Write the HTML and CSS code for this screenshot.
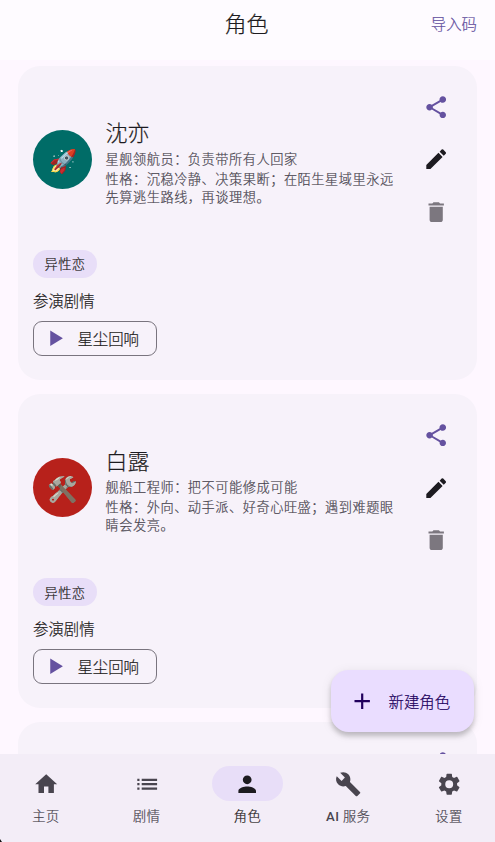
FILE: index.html
```html
<!DOCTYPE html>
<html lang="zh-CN">
<head>
<meta charset="utf-8">
<title>角色</title>
<link rel="stylesheet" href="styles.css">
</head>
<body>
<svg class="defs" aria-hidden="true">
  <symbol id="share" viewBox="0 0 24 24"><path d="M18 16.08c-.76 0-1.44.3-1.96.77L8.91 12.7c.05-.23.09-.46.09-.7s-.04-.47-.09-.7l7.05-4.11c.54.5 1.25.81 2.04.81 1.66 0 3-1.34 3-3s-1.34-3-3-3-3 1.34-3 3c0 .24.04.47.09.7L8.04 9.81C7.5 9.31 6.79 9 6 9c-1.66 0-3 1.34-3 3s1.34 3 3 3c.79 0 1.5-.31 2.04-.81l7.12 4.16c-.05.21-.08.43-.08.65 0 1.61 1.31 2.92 2.92 2.92s2.92-1.31 2.92-2.92-1.31-2.92-2.92-2.92z"/></symbol>
  <symbol id="edit" viewBox="0 0 24 24"><path d="M3 17.25V21h3.75L17.81 9.94l-3.75-3.75L3 17.25zM20.71 7.04c.39-.39.39-1.02 0-1.41l-2.34-2.34a.996.996 0 0 0-1.41 0l-1.83 1.83 3.75 3.75 1.83-1.83z"/></symbol>
  <symbol id="delete" viewBox="0 0 24 24"><path d="M6 19c0 1.1.9 2 2 2h8c1.100 0 2-.9 2-2V7H6v12zM19 4h-3.500l-1-1h-5l-1 1H5v2h14V4z"/></symbol>
  <symbol id="play" viewBox="0 0 24 24"><path d="M7.500 5v14l11.500-7z"/></symbol>
</svg>
<div class="app">
  <header class="topbar">
    <h1>角色</h1>
    <button class="import">导入码</button>
  </header>
  <main class="list">
    <article class="card">
      <div class="profile">
        <div class="avatar teal">🚀</div>
        <div class="info">
          <h2>沈亦</h2>
          <p>星舰领航员：负责带所有人回家</p>
          <p class="trait">性格：沉稳冷静、决策果断；在陌生星域里永远先算逃生路线，再谈理想。</p>
        </div>
        <div class="actions">
          <button><svg class="share"><use href="#share"/></svg></button>
          <button><svg class="edit"><use href="#edit"/></svg></button>
          <button><svg class="delete"><use href="#delete"/></svg></button>
        </div>
      </div>
      <span class="tag">异性恋</span>
      <h3>参演剧情</h3>
      <button class="story"><svg><use href="#play"/></svg>星尘回响</button>
    </article>
    <article class="card">
      <div class="profile">
        <div class="avatar red"><span class="tools">🛠️</span></div>
        <div class="info">
          <h2>白露</h2>
          <p>舰船工程师：把不可能修成可能</p>
          <p class="trait">性格：外向、动手派、好奇心旺盛；遇到难题眼睛会发亮。</p>
        </div>
        <div class="actions">
          <button><svg class="share"><use href="#share"/></svg></button>
          <button><svg class="edit"><use href="#edit"/></svg></button>
          <button><svg class="delete"><use href="#delete"/></svg></button>
        </div>
      </div>
      <span class="tag">异性恋</span>
      <h3>参演剧情</h3>
      <button class="story"><svg><use href="#play"/></svg>星尘回响</button>
    </article>
    <article class="card">
      <div class="profile">
        <div class="actions">
          <button><svg class="share"><use href="#share"/></svg></button>
        </div>
      </div>
    </article>
  </main>
  <button class="fab"><svg viewBox="0 0 24 24"><path d="M19 13h-6v6h-2v-6H5v-2h6V5h2v6h6v2z"/></svg>新建角色</button>
  <nav class="nav">
    <a class="item"><span class="pill"><svg viewBox="0 0 24 24"><path d="M10 20v-6h4v6h5v-8h3L12 3 2 12h3v8z"/></svg></span>主页</a>
    <a class="item"><span class="pill"><svg viewBox="0 0 24 24"><path d="M3 13h2v-2H3v2zm0 4h2v-2H3v2zm0-8h2V7H3v2zm4 4h14v-2H7v2zm0 4h14v-2H7v2zM7 7v2h14V7H7z"/></svg></span>剧情</a>
    <a class="item active"><span class="pill"><svg viewBox="0 0 24 24"><path d="M12 12c2.210 0 4-1.790 4-4s-1.790-4-4-4-4 1.790-4 4 1.790 4 4 4zm0 2c-2.670 0-8 1.340-8 4v2h16v-2c0-2.660-5.330-4-8-4z"/></svg></span>角色</a>
    <a class="item"><span class="pill"><svg viewBox="0 0 24 24"><path d="M22.700 19l-9.100-9.100c.9-2.300.4-5-1.500-6.900-2-2-5-2.400-7.400-1.300L9 6 6 9 1.600 4.700C.4 7.100.9 10.100 2.900 12.100c1.900 1.900 4.600 2.400 6.900 1.500l9.100 9.100c.4.4 1 .4 1.400 0l2.300-2.300c.5-.4.5-1.100.1-1.400z"/></svg></span><span><b>AI</b> 服务</span></a>
    <a class="item"><span class="pill"><svg viewBox="0 0 24 24"><path d="M19.140 12.940c.04-.3.06-.61.06-.94 0-.32-.02-.64-.07-.94l2.030-1.580a.49.49 0 0 0 .12-.61l-1.920-3.320a.488.488 0 0 0-.59-.22l-2.390.96c-.5-.38-1.030-.7-1.620-.94l-.36-2.540a.484.484 0 0 0-.48-.41h-3.840c-.24 0-.43.17-.47.41l-.36 2.540c-.59.24-1.130.57-1.620.94l-2.390-.96c-.22-.08-.47 0-.59.22L2.740 8.870c-.12.21-.08.47.12.61l2.030 1.580c-.05.3-.09.63-.09.94s.02.64.07.94l-2.030 1.580a.49.49 0 0 0-.12.61l1.920 3.320c.12.22.37.29.59.22l2.390-.96c.5.38 1.030.7 1.620.94l.36 2.540c.05.24.24.41.48.41h3.840c.24 0 .44-.17.47-.41l.36-2.540c.59-.24 1.130-.56 1.620-.94l2.390.96c.22.08.47 0 .59-.22l1.920-3.320c.12-.22.07-.47-.12-.61l-2.010-1.580zM12 15.600A3.600 3.600 0 1 1 12 8.400a3.600 3.600 0 0 1 0 7.200z"/></svg></span>设置</a>
  </nav>
  <i class="corner"></i>
</div>
</body>
</html>
```

FILE: styles.css
```css
* { box-sizing: border-box; margin: 0; }
body {
  background: #fef7ff;
  color: #1d1b20;
  font-family: "Noto Sans CJK SC", sans-serif;
  font-weight: 300;
  -webkit-text-stroke: .2px currentColor;
}
button {
  padding: 0;
  border: 0;
  background: none;
  color: inherit;
  font: inherit;
}
h1, h2, h3 { font-weight: inherit; }
svg { width: 26.4px; height: 26.4px; fill: currentColor; flex: none; }
.defs { display: none; }
.app {
  position: relative;
  display: flex;
  flex-direction: column;
  height: 842px;
  overflow: hidden;
}
.topbar {
  display: grid;
  grid-template-columns: 1fr auto 1fr;
  align-items: center;
  height: 60px;
  padding: 0 18px 16px 17px;
  flex: none;
  background: #fefbff;
}
.topbar h1 { grid-column: 2; margin-left: -1px; font-size: 22px; line-height: 30px; }
.import { justify-self: end; padding-top: 2px; color: #6552a0; font-size: 15.4px; }
.list {
  display: flex;
  flex-direction: column;
  gap: 14px;
  flex: 1;
  min-height: 0;
  padding: 5.8px 17.6px 0;
  overflow: hidden;
}
.card {
  flex: none;
  height: 314.3px;
  padding: 14.5px 15px 14px 15.4px;
  border-radius: 22px;
  background: #f7f2fa;
}
.profile { display: flex; align-items: center; height: 158.4px; }
.avatar {
  display: grid;
  place-items: center;
  width: 59.4px;
  height: 59.4px;
  border-radius: 50%;
  font-size: 24.5px;
  line-height: 1;
}
.teal { background: #006c67; font-size: 22.5px; }
.red { background: #b7211b; }
.tools { filter: grayscale(.75) sepia(.3) brightness(.95); }
.info { width: 292px; margin-left: 13.2px; padding-top: 3.4px; }
.info h2 { font-size: 22px; line-height: 29.6px; }
.info p {
  margin-top: 2.4px;
  color: #49454f;
  font-size: 13.2px;
  letter-spacing: .53px;
  line-height: 17.6px;
}
.info h2 + p { margin-top: 3.4px; }
.actions { margin-left: auto; align-self: flex-start; }
.actions button {
  display: grid;
  place-items: center;
  width: 52.8px;
  height: 52.8px;
}
.share { color: #6552a0; }
.delete { color: #7c777f; }
.tag {
  display: flex;
  align-items: center;
  justify-content: center;
  width: 64px;
  height: 28.4px;
  margin-top: 11px;
  border-radius: 15px;
  background: #e8def8;
  font-size: 13.2px;
  letter-spacing: .5px;
}
.card h3 { margin-top: 11px; font-size: 15.4px; line-height: 22px; }
.story {
  display: flex;
  align-items: center;
  width: 124px;
  height: 35px;
  margin-top: 9.5px;
  padding-left: 8px;
  gap: 9px;
  border: 1px solid #79747e;
  border-radius: 9px;
  font-size: 15.4px;
}
.story svg { color: #6552a0; }
.fab {
  position: absolute;
  left: 331px;
  top: 670px;
  display: flex;
  align-items: center;
  gap: 13.2px;
  width: 142.500px;
  height: 61.600px;
  padding-left: 18px;
  border-radius: 17.600px;
  background: #eaddff;
  box-shadow: 0 4px 5px rgba(0, 0, 0, .2), 0 2px 12px rgba(0, 0, 0, .08);
  color: #21005d;
  font-size: 15.4px;
}
.nav {
  display: flex;
  gap: 8.8px;
  height: 88px;
  padding-top: 12.2px;
  flex: none;
  background: #f3edf7;
  color: #49454f;
  font-size: 13.2px;
  letter-spacing: .55px;
}
.item { flex: 1; display: flex; flex-direction: column; align-items: center; gap: 4.8px; }
.item b { font-family: Roboto, sans-serif; font-weight: 500; -webkit-text-stroke: 0; }
.pill {
  display: grid;
  place-items: center;
  width: 70.4px;
  height: 35.2px;
  border-radius: 18px;
}
.active { color: #1d1b20; }
.active .pill { background: #e8def8; }
.corner {
  position: absolute;
  left: 0;
  bottom: 0;
  width: 2px;
  height: 3px;
  background: #111;
  clip-path: polygon(0 0, 100% 100%, 0 100%);
}
```
